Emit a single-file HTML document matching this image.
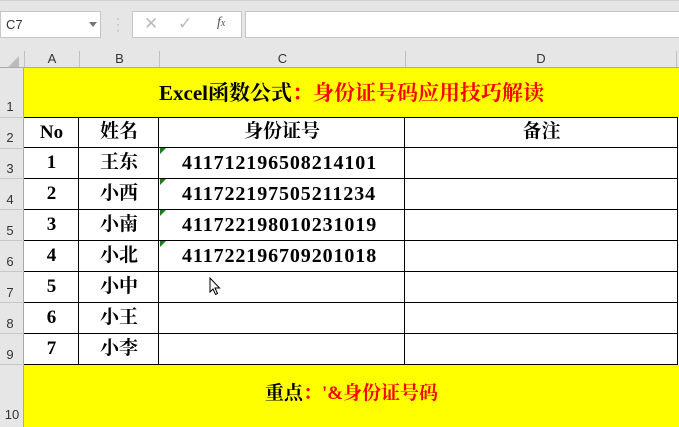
<!DOCTYPE html>
<html><head><meta charset="utf-8"><style>
*{margin:0;padding:0;box-sizing:border-box}
body{width:679px;height:427px;background:#e6e6e6;position:relative;overflow:hidden;font-family:"Liberation Sans",sans-serif}
.a{position:absolute}
.hdr{color:#333;font-size:13px;text-align:center;line-height:16px}
.c{position:absolute;text-align:center;font-family:"Liberation Serif","Noto Serif CJK SC","Noto Sans CJK SC",serif;font-weight:bold;font-size:19px;color:#000;line-height:22px}
.n{font-weight:bold}
.id{position:absolute;left:182px;font-family:"Liberation Serif",serif;font-weight:bold;font-size:20px;letter-spacing:0.9px;line-height:22px}
.tri{position:absolute;left:160px;width:0;height:0;border-top:6px solid #1e7b1e;border-right:6px solid transparent}
</style></head><body>
<div class="a" style="left:0;top:0;width:679px;height:44px;background:#e6e6e6;border-top:1px solid #d0d0d0"></div>
<div class="a" style="left:0;top:11px;width:101px;height:27px;background:#fff;border:1px solid #c6c6c6"></div>
<div class="a" style="left:6px;top:17px;font-size:13px;color:#333">C7</div>
<div class="a" style="left:89px;top:22px;border-top:5px solid #777;border-left:4px solid transparent;border-right:4px solid transparent"></div>
<div class="a" style="left:116px;top:15px;color:#aaa;font-size:12px;line-height:6px">·<br>·<br>·</div>
<div class="a" style="left:132px;top:11px;width:110px;height:27px;background:#fff;border:1px solid #c6c6c6"></div>
<div class="a" style="left:144px;top:14px;color:#bbb;font-size:17px">✕</div>
<div class="a" style="left:178px;top:14px;color:#bbb;font-size:17px">✓</div>
<div class="a" style="left:217px;top:15px;color:#555;font-size:14px;font-style:italic;font-family:'Liberation Serif',serif">f<span style="font-size:10px">x</span></div>
<div class="a" style="left:245px;top:11px;width:440px;height:27px;background:#fff;border:1px solid #c6c6c6"></div>
<div class="a" style="left:0;top:50px;width:679px;height:18px;background:#e6e6e6;border-bottom:1px solid #aaa"></div>
<div class="a" style="left:8px;top:56px;border-bottom:11px solid #bbb;border-left:11px solid transparent"></div>
<div class="a hdr" style="left:24px;top:51px;width:55px;border-left:1px solid #c0c0c0">A</div>
<div class="a hdr" style="left:79px;top:51px;width:80px;border-left:1px solid #c0c0c0">B</div>
<div class="a hdr" style="left:159px;top:51px;width:246px;border-left:1px solid #c0c0c0">C</div>
<div class="a hdr" style="left:405px;top:51px;width:272px;border-left:1px solid #c0c0c0;border-right:1px solid #c0c0c0">D</div>
<div class="a" style="left:0;top:68px;width:24px;height:359px;background:#e6e6e6;border-right:1px solid #aaa"></div>
<div class="a hdr" style="left:0;top:99px;width:20px">1</div>
<div class="a hdr" style="left:0;top:130px;width:20px">2</div>
<div class="a hdr" style="left:0;top:161px;width:20px">3</div>
<div class="a hdr" style="left:0;top:192px;width:20px">4</div>
<div class="a hdr" style="left:0;top:223px;width:20px">5</div>
<div class="a hdr" style="left:0;top:254px;width:20px">6</div>
<div class="a hdr" style="left:0;top:285px;width:20px">7</div>
<div class="a hdr" style="left:0;top:316px;width:20px">8</div>
<div class="a hdr" style="left:0;top:347px;width:20px">9</div>
<div class="a hdr" style="left:0;top:407px;width:24px">10</div>
<div class="a" style="left:0;top:117px;width:24px;border-top:1px solid #c8c8c8"></div>
<div class="a" style="left:0;top:148px;width:24px;border-top:1px solid #c8c8c8"></div>
<div class="a" style="left:0;top:178px;width:24px;border-top:1px solid #c8c8c8"></div>
<div class="a" style="left:0;top:209px;width:24px;border-top:1px solid #c8c8c8"></div>
<div class="a" style="left:0;top:240px;width:24px;border-top:1px solid #c8c8c8"></div>
<div class="a" style="left:0;top:271px;width:24px;border-top:1px solid #c8c8c8"></div>
<div class="a" style="left:0;top:302px;width:24px;border-top:1px solid #c8c8c8"></div>
<div class="a" style="left:0;top:333px;width:24px;border-top:1px solid #c8c8c8"></div>
<div class="a" style="left:0;top:364px;width:24px;border-top:1px solid #c8c8c8"></div>
<div class="a" style="left:24px;top:68px;width:655px;height:49px;background:#ffff00"></div>
<div class="c" style="left:24px;top:82px;width:655px;font-size:21px">Excel函数公式<span style="color:#f00">：身份证号码应用技巧解读</span></div>
<div class="a" style="left:24px;top:117px;width:655px;height:248px;background:#fff"></div>
<div class="a" style="left:24px;top:365px;width:655px;height:62px;background:#ffff00"></div>
<div class="c" style="left:24px;top:383px;width:655px">重点<span style="color:#f00">：'&amp;身份证号码</span></div>
<div class="a" style="left:24px;top:117px;width:654px;height:248px;border:1px solid #000;border-left:none"></div>
<div class="a" style="left:78px;top:117px;height:248px;border-left:1px solid #000"></div>
<div class="a" style="left:158px;top:117px;height:248px;border-left:1px solid #000"></div>
<div class="a" style="left:404px;top:117px;height:248px;border-left:1px solid #000"></div>
<div class="a" style="left:24px;top:147px;width:654px;border-top:1px solid #000"></div>
<div class="a" style="left:24px;top:178px;width:654px;border-top:1px solid #000"></div>
<div class="a" style="left:24px;top:209px;width:654px;border-top:1px solid #000"></div>
<div class="a" style="left:24px;top:240px;width:654px;border-top:1px solid #000"></div>
<div class="a" style="left:24px;top:271px;width:654px;border-top:1px solid #000"></div>
<div class="a" style="left:24px;top:302px;width:654px;border-top:1px solid #000"></div>
<div class="a" style="left:24px;top:333px;width:654px;border-top:1px solid #000"></div>
<div class="c" style="left:24px;top:122px;width:55px">No</div>
<div class="c n" style="left:79px;top:121px;width:80px">姓名</div>
<div class="c n" style="left:159px;top:121px;width:246px">身份证号</div>
<div class="c n" style="left:405px;top:121px;width:273px">备注</div>
<div class="c" style="left:24px;top:152px;width:55px">1</div><div class="c n" style="left:79px;top:152px;width:80px">王东</div>
<div class="c" style="left:24px;top:183px;width:55px">2</div><div class="c n" style="left:79px;top:183px;width:80px">小西</div>
<div class="c" style="left:24px;top:214px;width:55px">3</div><div class="c n" style="left:79px;top:214px;width:80px">小南</div>
<div class="c" style="left:24px;top:245px;width:55px">4</div><div class="c n" style="left:79px;top:245px;width:80px">小北</div>
<div class="c" style="left:24px;top:276px;width:55px">5</div><div class="c n" style="left:79px;top:276px;width:80px">小中</div>
<div class="c" style="left:24px;top:307px;width:55px">6</div><div class="c n" style="left:79px;top:307px;width:80px">小王</div>
<div class="c" style="left:24px;top:338px;width:55px">7</div><div class="c n" style="left:79px;top:338px;width:80px">小李</div>
<div class="tri" style="top:148px"></div><div class="id" style="top:152px">411712196508214101</div>
<div class="tri" style="top:179px"></div><div class="id" style="top:183px">411722197505211234</div>
<div class="tri" style="top:210px"></div><div class="id" style="top:214px">411722198010231019</div>
<div class="tri" style="top:241px"></div><div class="id" style="top:245px">411722196709201018</div>
<svg class="a" style="left:209px;top:277px" width="12" height="19" viewBox="0 0 12 19"><path d="M1 1 L1 15 L4 12 L6.5 17.5 L8.5 16.5 L6 11 L10.5 11 Z" fill="#fff" stroke="#000" stroke-width="1"/></svg>
</body></html>
